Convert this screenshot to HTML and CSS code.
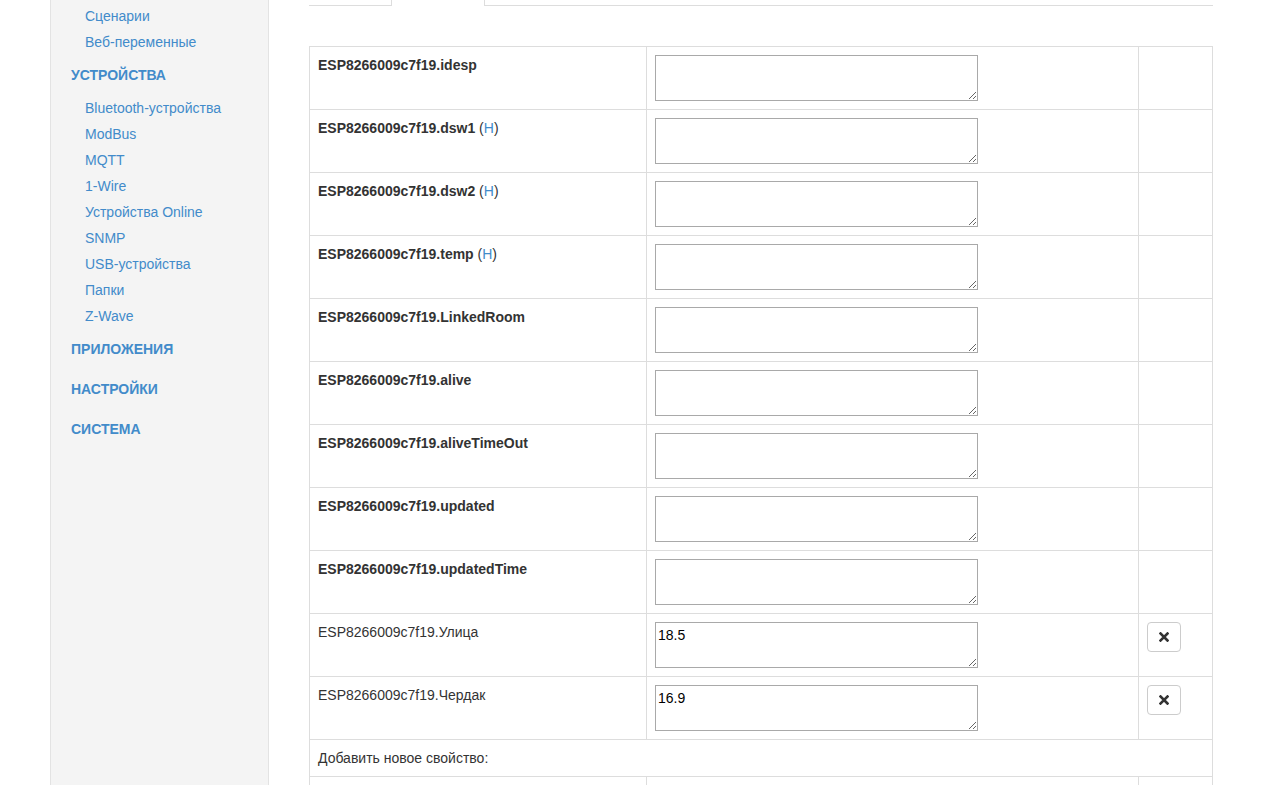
FILE: index.html
```html
<!DOCTYPE html>
<html lang="ru">
<head>
	<meta charset="UTF-8">
	<title>Свойства объекта</title>
	<link rel="stylesheet" href="styles.css">
</head>
<body>
	<div class="layout">
		<aside class="sidebar">
			<ul class="nav-list">
				<li class="sub"><a href="#">Сценарии</a></li>
				<li class="sub"><a href="#">Веб-переменные</a></li>
				<li class="head"><a href="#">Устройства</a></li>
				<li class="sub"><a href="#">Bluetooth-устройства</a></li>
				<li class="sub"><a href="#">ModBus</a></li>
				<li class="sub"><a href="#">MQTT</a></li>
				<li class="sub"><a href="#">1-Wire</a></li>
				<li class="sub"><a href="#">Устройства Online</a></li>
				<li class="sub"><a href="#">SNMP</a></li>
				<li class="sub"><a href="#">USB-устройства</a></li>
				<li class="sub"><a href="#">Папки</a></li>
				<li class="sub"><a href="#">Z-Wave</a></li>
				<li class="head"><a href="#">Приложения</a></li>
				<li class="head"><a href="#">Настройки</a></li>
				<li class="head"><a href="#">Система</a></li>
			</ul>
		</aside>

		<main class="main-content">
			<div class="tabs">
				<div class="tab"></div>
				<div class="tab active"></div>
				<div class="tab-rest"></div>
			</div>

			<table class="props">
				<colgroup>
					<col class="c-name">
					<col class="c-value">
					<col class="c-action">
				</colgroup>
				<tbody>
					<tr>
						<td><b>ESP8266009c7f19.idesp</b></td>
						<td><textarea rows="2"></textarea></td>
						<td></td>
					</tr>
					<tr>
						<td><b>ESP8266009c7f19.dsw1</b> (<a href="#">H</a>)</td>
						<td><textarea rows="2"></textarea></td>
						<td></td>
					</tr>
					<tr>
						<td><b>ESP8266009c7f19.dsw2</b> (<a href="#">H</a>)</td>
						<td><textarea rows="2"></textarea></td>
						<td></td>
					</tr>
					<tr>
						<td><b>ESP8266009c7f19.temp</b> (<a href="#">H</a>)</td>
						<td><textarea rows="2"></textarea></td>
						<td></td>
					</tr>
					<tr>
						<td><b>ESP8266009c7f19.LinkedRoom</b></td>
						<td><textarea rows="2"></textarea></td>
						<td></td>
					</tr>
					<tr>
						<td><b>ESP8266009c7f19.alive</b></td>
						<td><textarea rows="2"></textarea></td>
						<td></td>
					</tr>
					<tr>
						<td><b>ESP8266009c7f19.aliveTimeOut</b></td>
						<td><textarea rows="2"></textarea></td>
						<td></td>
					</tr>
					<tr>
						<td><b>ESP8266009c7f19.updated</b></td>
						<td><textarea rows="2"></textarea></td>
						<td></td>
					</tr>
					<tr>
						<td><b>ESP8266009c7f19.updatedTime</b></td>
						<td><textarea rows="2"></textarea></td>
						<td></td>
					</tr>
					<tr>
						<td>ESP8266009c7f19.Улица</td>
						<td><textarea rows="2">18.5</textarea></td>
						<td><button class="btn-remove" title="Удалить"><svg width="10" height="10" viewBox="0 0 10 10"><path d="M1.5 1.5 L8.5 8.5 M8.5 1.5 L1.5 8.5" stroke="#333" stroke-width="2.6" stroke-linecap="square"/></svg></button></td>
					</tr>
					<tr>
						<td>ESP8266009c7f19.Чердак</td>
						<td><textarea rows="2">16.9</textarea></td>
						<td><button class="btn-remove" title="Удалить"><svg width="10" height="10" viewBox="0 0 10 10"><path d="M1.5 1.5 L8.5 8.5 M8.5 1.5 L1.5 8.5" stroke="#333" stroke-width="2.6" stroke-linecap="square"/></svg></button></td>
					</tr>
					<tr>
						<td colspan="3">Добавить новое свойство:</td>
					</tr>
					<tr>
						<td><input type="text" class="new-name"></td>
						<td><textarea rows="2"></textarea></td>
						<td></td>
					</tr>
				</tbody>
			</table>
		</main>
	</div>
</body>
</html>
```

FILE: styles.css
```css
body {
	margin: 0;
	font-family: "Liberation Sans", Arial, sans-serif;
	font-size: 14px;
	line-height: 20px;
	color: #333;
	background: #fff;
}

a {
	color: #428bca;
	text-decoration: none;
}

.layout {
	display: flex;
	align-items: stretch;
	padding-left: 50px;
	gap: 40px;
	min-height: 100vh;
}

.sidebar {
	width: 217px;
	flex: none;
	background: #f4f4f4;
	border: 1px solid #e3e3e3;
	border-top: none;
	padding-top: 3px;
}
.nav-list {
	list-style: none;
	margin: 0;
	padding: 0;
}
.nav-list .sub {
	padding: 3px 0 3px 34px;
}
.nav-list .head {
	padding: 10px 0 10px 20px;
	font-weight: bold;
	text-transform: uppercase;
}

.main-content {
	width: 904px;
	flex: none;
}

.tabs {
	display: flex;
	height: 6px;
}
.tab {
	width: 82px;
	border-bottom: 1px solid #ddd;
}
.tab.active {
	width: 92px;
	border: 1px solid #ddd;
	border-top: none;
	border-bottom: none;
}
.tab-rest {
	flex: 1;
	border-bottom: 1px solid #ddd;
}

.props {
	margin-top: 40px;
	width: 903px;
	table-layout: fixed;
	border-collapse: collapse;
	border-spacing: 0;
}
.c-name {
	width: 337px;
}
.c-value {
	width: 492px;
}
.c-action {
	width: 74px;
}
.props td {
	border: 1px solid #ddd;
	padding: 8px;
	vertical-align: top;
	line-height: 20px;
}
.props b {
	font-weight: bold;
}

textarea {
	display: block;
	box-sizing: border-box;
	width: 323px;
	height: 46px;
	margin: 0;
	padding: 2px;
	border: 1px solid #a9a9a9;
	font-family: "Liberation Sans", Arial, sans-serif;
	font-size: 14px;
	line-height: 20px;
	color: #000;
}

.new-name {
	box-sizing: border-box;
	width: 200px;
	height: 26px;
	border: 1px solid #a9a9a9;
	font: inherit;
}

.btn-remove {
	display: flex;
	align-items: center;
	justify-content: center;
	width: 34px;
	height: 30px;
	padding: 0;
	background: #fff;
	border: 1px solid #ccc;
	border-radius: 4px;
	cursor: pointer;
}
```
